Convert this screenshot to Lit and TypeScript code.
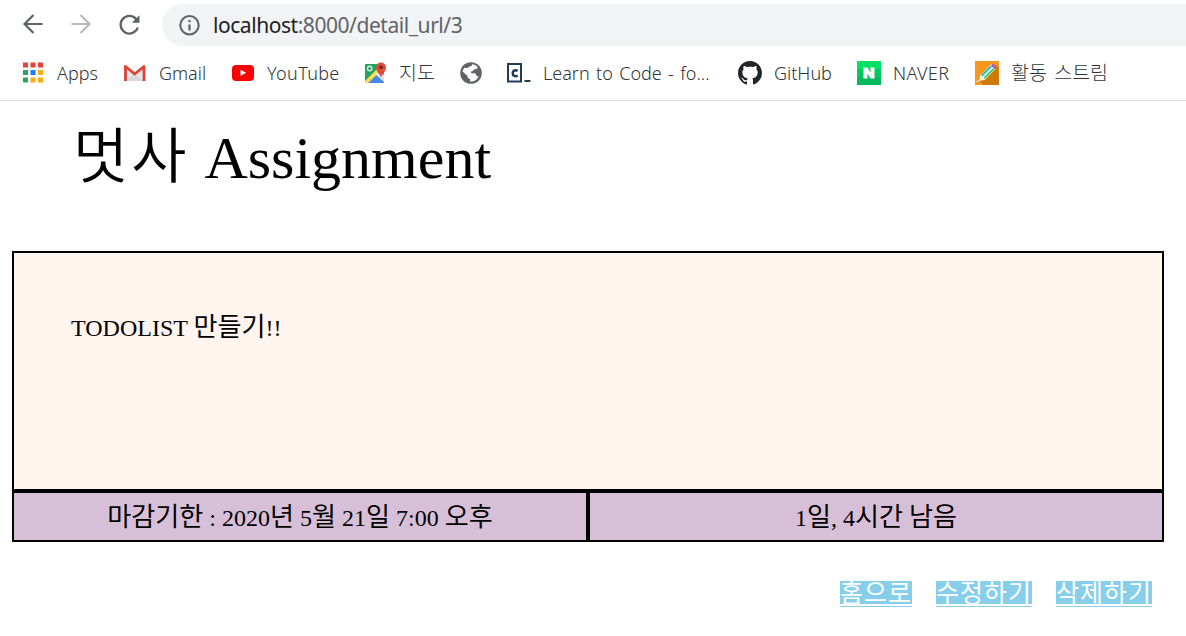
import { LitElement, html, svg, css } from "lit";
import { customElement } from "lit/decorators.js";

const icons = {
  apps: svg`<g>${[
    ["#ea4335", "#ea4335", "#ea4335"],
    ["#34a060", "#1a82f7", "#fbab0c"],
    ["#34a060", "#fbab0c", "#fbab0c"],
  ].map((row, y) => row.map((c, x) => svg`<rect x=${2 + x * 7.5} y=${1.5 + y * 7.5} width="5" height="5" fill=${c} />`))}</g>`,
  gmail: svg`<path d="M1 4h21v16H1z" fill="#e8e8e8"/><path d="M3 20 12 12l8 8z" fill="#d9d9d9"/><path d="M3 4h17l-8.500 7z" fill="#f7f7f7"/><path d="M2.500 20V5.500l9.200 7.500L21 5.500V20" fill="none" stroke="#dc4437" stroke-width="2.800" stroke-linejoin="round"/>`,
  youtube: svg`<rect x="1" y="4" width="22" height="16" rx="4" fill="#f00"/><path d="M9.500 8.700v6.200l5.600-3.100z" fill="#fff"/>`,
  maps: svg`<rect x="2" y="3" width="19" height="19" rx="1" fill="#22a45d"/><path d="m3 22 9-9 9 9z" fill="#4688f1"/><path d="m2 20 13-13 3 3L5 22H2z" fill="#ffdc48"/><path d="m12 13 4-4 5 5v7z" fill="#e1e1e1"/><circle cx="6.700" cy="7.500" r="2.200" fill="none" stroke="#d9f0e2" stroke-width="1.400"/><path d="M18 17c-.5-4-5-6-5-10.500a5 5 0 0 1 10 0C23 11 18.600 13 18 17z" fill="#dd4b3e"/><circle cx="18" cy="6.200" r="1.800" fill="#7c1d17"/>`,
  globe: svg`<circle cx="12" cy="12" r="10.800" fill="#5f6368"/><path d="M12.800 3.200c2.500.200 4.400 1.300 6 3-.7 1.800-2 2.300-3.700 2.100-.4 1.500-1.300 2-3 2.100v1.800h3.200c1.700 0 1.800 1.800 2.300 3h2.100c-1.600 3.700-4.700 5.600-8.600 5.300v-2.600c-1.800-.2-2.600-1-2.600-2.800L3.400 10.200c.5-1.400 1.200-2.600 2.200-3.700 1 .8 2.200.6 3.200.2 1-.4 1.400-1.800 4-1.700z" fill="#fff"/>`,
  learn: svg`<rect x="1" y="3" width="13" height="17.500" fill="#fff" stroke="#213d55" stroke-width="2"/><path d="M10.700 9.800c-2.300-1.300-5-.3-5 2.400s2.700 3.700 5 2.300" fill="none" stroke="#213d55" stroke-width="2.500"/><path d="M17.500 20h6" stroke="#213d55" stroke-width="2"/>`,
  github: svg`<path transform="scale(1.5)" fill="#20262c" d="M8 0C3.580 0 0 3.580 0 8c0 3.540 2.290 6.530 5.470 7.590.4.070.55-.17.55-.38 0-.19-.01-.82-.01-1.490-2.010.37-2.530-.49-2.690-.94-.09-.23-.48-.94-.82-1.130-.28-.15-.68-.52-.01-.53.63-.01 1.080.58 1.230.82.720 1.210 1.870.87 2.330.66.070-.52.28-.87.510-1.070-1.780-.2-3.640-.89-3.640-3.950 0-.87.310-1.590.82-2.150-.08-.2-.36-1.020.08-2.120 0 0 .67-.21 2.200.82.640-.18 1.320-.27 2-.27s1.360.09 2 .27c1.530-1.040 2.200-.82 2.200-.82.440 1.100.160 1.920.080 2.120.510.560.82 1.270.82 2.150 0 3.070-1.870 3.750-3.650 3.950.290.250.540.730.540 1.480 0 1.070-.01 1.930-.01 2.200 0 .210.150.460.550.380A8.010 8.010 0 0 0 16 8c0-4.420-3.580-8-8-8z"/>`,
  naver: svg`<path d="M0 0h24v24H0z" fill="#04e068"/><path d="M0 8h24v16H0z" fill="#04ca5e"/><path d="M0 16h24v8H0z" fill="#06b85c"/><path d="M6.500 6.500h4l3 5v-5h4v11h-4l-3-5v5h-4z" fill="#fff"/>`,
  stream: svg`<path d="M0 0h24v24H0z" fill="#f7981d"/><path d="m5 20 16-16 3 3v17H8z" fill="#cf7908"/><path d="m4 20 1.200-5.500L16.500 3l4.500 4.500L9.500 19z" fill="#f0f6dc"/><path d="m6.800 14.700 9.400-9.400" stroke="#18b7d1" stroke-width="1.900"/><path d="m9.200 17.200 9.400-9.400" stroke="#35c46c" stroke-width="1.700"/><path d="m16 4.500 2-2 3.800 3.700-2 2z" fill="#a857bd"/><path d="M1 20.500c2-.8 2.500.2 4-1" fill="none" stroke="#fff3d8"/>`,
};

const bookmarks: { icon: keyof typeof icons; label: string; cls?: string }[] = [
  { icon: "apps", label: "Apps" },
  { icon: "gmail", label: "Gmail" },
  { icon: "youtube", label: "YouTube", cls: "loose" },
  { icon: "maps", label: "지도", cls: "hangul" },
  { icon: "globe", label: "" },
  { icon: "learn", label: "Learn to Code - fo...", cls: "wide" },
  { icon: "github", label: "GitHub" },
  { icon: "naver", label: "NAVER", cls: "loose" },
  { icon: "stream", label: "활동 스트림", cls: "hangul" },
];

@customElement("app-root")
export class AppRoot extends LitElement {
  static styles = css`
    :host { display: block; height: 636px; overflow: hidden; background: #fff; color: #000;
      font-family: "Liberation Serif", "Noto Sans CJK KR", serif; }
    * { box-sizing: border-box; }
    svg { display: block; flex: none; }
    .toolbar { display: flex; height: 46px; padding: 4px 0 0 21px; }
    .nav { display: flex; gap: 24px; width: 141px; padding-top: 8px; }
    .address { flex: 1; display: flex; align-items: center; gap: 12px; padding-left: 15px;
      background: #f1f3f4; border-radius: 21px 0 0 21px; color: #5f6368;
      font: 21px/42px "Noto Sans", sans-serif; }
    .url { white-space: nowrap; letter-spacing: -0.45px; }
    .host { color: #202124; }
    .bookmarks { display: grid; height: 55px; padding-left: 21px; border-bottom: 1px solid #dadce0;
      grid-template-columns: 102px 108px 132px 96px 48px 231px 119px 118px 150px; }
    .bookmark { display: flex; align-items: center; gap: 12px; white-space: nowrap; color: #303438;
      font: 300 18px/24px "Noto Sans", sans-serif; }
    .label { margin-top: -1px; }
    .hangul { font: 300 19.5px/24px "Noto Sans CJK KR", sans-serif; word-spacing: 3px; margin-top: -3px; }
    .loose { letter-spacing: 0.35px; }
    .wide { word-spacing: 1.7px; }
    .title { margin: 0; padding: 22px 0 0 73px; height: 150px; font-size: 60px; line-height: 70px; font-weight: 400; }
    .ko { font-family: "Noto Sans CJK KR", sans-serif; font-size: 1.087em; line-height: 0; }
    .title .ko { font-weight: 350; font-size: 1em; letter-spacing: 3px; }
    .board { margin: 0 22px 0 12px; font-size: 24px; line-height: 28px; border: 2px solid #000; }
    .task { height: 236px; padding: 61px 0 0 57px; background: #fff4ee; }
    .meta { display: grid; grid-template-columns: 572px 1fr; column-gap: 4px; background: #000;
      border-top: 4px solid #000; text-align: center; line-height: 47px; }
    .cell { height: 47px; padding-top: 2px; background: #d8bfd8; }
    .links { display: flex; justify-content: flex-end; gap: 24px; padding: 39px 34px 0 0; }
    .link { height: 26px; line-height: 20px; color: #fff; background: skyblue; font-family: "Noto Sans CJK KR", sans-serif;
      font-size: 25px; letter-spacing: 1px; text-decoration: underline; text-decoration-thickness: 2px;
      text-underline-offset: 2px; text-decoration-skip-ink: none; }
  `;

  private text(s: string) {
    return s.split(/([가-힣]+)/).map((part) => (/[가-힣]/.test(part) ? html`<span class="ko">${part}</span>` : part));
  }

  render() {
    return html`
      <header>
        <div class="toolbar">
          <nav class="nav">
            <svg width="24" height="24" viewBox="0 0 24 24" fill="none" stroke="#5f6368" stroke-width="2.200"><path d="M21.500 12H3.500M12.500 3 3.500 12l9 9"/></svg>
            <svg width="24" height="24" viewBox="0 0 24 24" fill="none" stroke="#bababc" stroke-width="2.200"><path d="M2.500 12h18M11.500 3l9 9-9 9"/></svg>
            <svg width="24" height="26" viewBox="0 0 24 26" fill="none" stroke="#5f6368" stroke-width="2.300"><path d="M19.300 7.200A8.800 8.800 0 1 0 20.800 15.500"/><path d="M22.500 3.200v7.600h-7.600z" fill="#5f6368" stroke="none"/></svg>
          </nav>
          <div class="address">
            <svg width="24" height="24" viewBox="0 0 24 24"><circle cx="12.500" cy="12.300" r="9.200" fill="none" stroke="#5f6368" stroke-width="2"/><path d="M12.500 11.500v6M12.500 7v2.300" stroke="#5f6368" stroke-width="2.200"/></svg>
            <span class="url"><span class="host">localhost</span>:8000/detail_url/3</span>
          </div>
        </div>
        <div class="bookmarks">
          ${bookmarks.map((b) => html`<div class="bookmark">
            <svg width="24" height="24" viewBox="0 0 24 24">${icons[b.icon]}</svg>
            <span class="label ${b.cls ?? ""}">${b.label}</span>
          </div>`)}
        </div>
      </header>
      <main>
        <h1 class="title">${this.text("멋사 Assignment")}</h1>
        <section class="board">
          <div class="task">${this.text("TODOLIST 만들기!!")}</div>
          <div class="meta">
            <div class="cell">${this.text("마감기한 : 2020년 5월 21일 7:00 오후")}</div>
            <div class="cell">${this.text("1일, 4시간 남음")}</div>
          </div>
        </section>
        <nav class="links">
          <a class="link">홈으로</a><a class="link">수정하기</a><a class="link">삭제하기</a>
        </nav>
      </main>
    `;
  }
}
